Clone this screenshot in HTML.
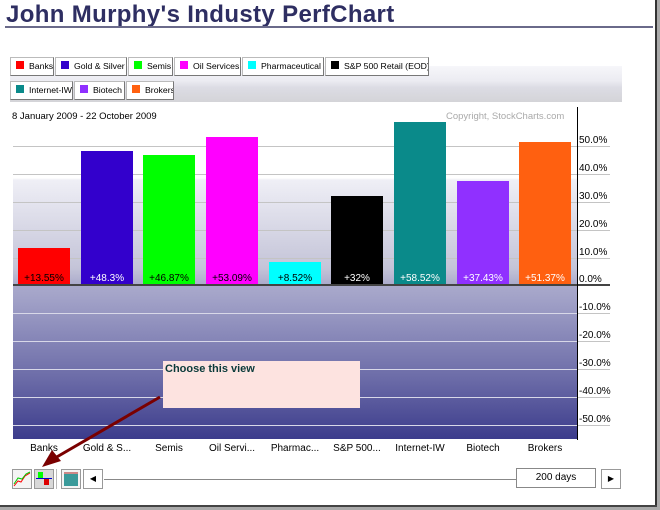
<!DOCTYPE html>
<html><head><meta charset="utf-8"><style>
*{margin:0;padding:0;box-sizing:border-box}
body{width:660px;height:510px;background:#fff;position:relative;overflow:hidden;font-family:"Liberation Sans",sans-serif;font-size:10px;color:#000}
.abs{position:absolute}
.title{left:6px;top:1px;font-size:24px;font-weight:bold;color:#2e2e62;letter-spacing:0.35px}
.uline{left:5px;top:26px;width:648px;height:2px;background:#6a6a8a}
.rb{left:655px;top:0;width:2px;height:506px;background:#333}
.rs{left:657px;top:0;width:3px;height:508px;background:#aaa}
.bb{left:0;top:505px;width:657px;height:2px;background:#444}
.bs{left:0;top:507px;width:660px;height:3px;background:#aaa}
.strip{left:10px;top:66px;width:612px;height:36px;background:linear-gradient(#f6f6fa,#ececf2 40%,#dcdce4 60%,#d4d4d8)}
.tab{position:absolute;height:19px;background:#fff;border:1px solid #bbb;border-right-color:#777;border-bottom-color:#777;font-size:8.7px;line-height:17px;padding-left:5px;white-space:nowrap;overflow:hidden}
.tab i{display:inline-block;width:8px;height:8px;margin-right:5px;vertical-align:-0px}
.plot{left:13px;top:118px;width:564px;height:321px;background:linear-gradient(#fff 0,#fff 60px,#efeff6 62px,#c4c4d8 150px,#aaaacb 167px,#a2a2c8 180px,#6c6ca8 260px,#3c3c8c 321px)}
.gl{position:absolute;height:1px;background:#c4c4c4}
.gw{position:absolute;height:1px;background:#d8d8e8}
.zero{left:13px;top:284px;width:597px;height:2px;background:#444}
.vax{left:577px;top:107px;width:1px;height:333px;background:#000}
.bar{position:absolute;width:52px;bottom:225px}
.bar span{position:absolute;bottom:1px;left:0;width:100%;text-align:center;font-size:10px;color:#fff}
.yl{position:absolute;left:579px;font-size:10px}
.xl{position:absolute;top:443px;width:62px;text-align:center;font-size:10px}
.btn{position:absolute;top:469px;width:20px;height:20px;border:1px solid #999;background:#f4f4f4}
</style></head><body>
<div class="abs title">John Murphy's Industy PerfChart</div>
<div class="abs uline"></div>
<div class="abs strip"></div>
<div class="tab" style="left:10px;top:57px;width:44px"><i style="background:#f00"></i>Banks</div>
<div class="tab" style="left:55px;top:57px;width:72px"><i style="background:#3300cc"></i>Gold &amp; Silver</div>
<div class="tab" style="left:128px;top:57px;width:45px"><i style="background:#0f0"></i>Semis</div>
<div class="tab" style="left:174px;top:57px;width:67px"><i style="background:#f0f"></i>Oil Services</div>
<div class="tab" style="left:242px;top:57px;width:82px"><i style="background:#0ff"></i>Pharmaceutical</div>
<div class="tab" style="left:325px;top:57px;width:104px"><i style="background:#000"></i>S&amp;P 500 Retail (EOD)</div>
<div class="tab" style="left:10px;top:81px;width:63px"><i style="background:#0a8a8a"></i>Internet-IW</div>
<div class="tab" style="left:74px;top:81px;width:51px"><i style="background:#9030ff"></i>Biotech</div>
<div class="tab" style="left:126px;top:81px;width:48px"><i style="background:#ff6010"></i>Brokers</div>
<div class="abs plot"></div>
<div class="abs" style="left:12px;top:111px;font-size:9.5px">8 January 2009 - 22 October 2009</div>
<div class="abs" style="left:446px;top:111px;font-size:9.5px;color:#aaa">Copyright, StockCharts.com</div>
<div class="gl" style="left:13px;top:146px;width:597px"></div>
<div class="gl" style="left:13px;top:174px;width:597px"></div>
<div class="gl" style="left:13px;top:202px;width:597px"></div>
<div class="gl" style="left:13px;top:230px;width:597px"></div>
<div class="gl" style="left:13px;top:258px;width:597px"></div>
<div class="gw" style="left:13px;top:313px;width:564px"></div><div class="gl" style="left:577px;top:313px;width:33px"></div>
<div class="gw" style="left:13px;top:341px;width:564px"></div><div class="gl" style="left:577px;top:341px;width:33px"></div>
<div class="gw" style="left:13px;top:369px;width:564px"></div><div class="gl" style="left:577px;top:369px;width:33px"></div>
<div class="gw" style="left:13px;top:397px;width:564px"></div><div class="gl" style="left:577px;top:397px;width:33px"></div>
<div class="gw" style="left:13px;top:425px;width:564px"></div><div class="gl" style="left:577px;top:425px;width:33px"></div>
<div class="bar" style="left:18px;height:37px;background:#f00"><span style="color:#000">+13.55%</span></div>
<div class="bar" style="left:81px;height:134px;background:#3300cc"><span>+48.3%</span></div>
<div class="bar" style="left:143px;height:130px;background:#0f0"><span style="color:#000">+46.87%</span></div>
<div class="bar" style="left:206px;height:148px;background:#f0f"><span style="color:#000">+53.09%</span></div>
<div class="bar" style="left:269px;height:23px;background:#0ff"><span style="color:#000">+8.52%</span></div>
<div class="bar" style="left:331px;height:89px;background:#000"><span>+32%</span></div>
<div class="bar" style="left:394px;height:163px;background:#0a8a8a"><span>+58.52%</span></div>
<div class="bar" style="left:457px;height:104px;background:#9030ff"><span>+37.43%</span></div>
<div class="bar" style="left:519px;height:143px;background:#ff6010"><span>+51.37%</span></div>
<div class="abs zero"></div>
<div class="abs vax"></div>
<div class="yl" style="top:135px">50.0%</div>
<div class="yl" style="top:163px">40.0%</div>
<div class="yl" style="top:191px">30.0%</div>
<div class="yl" style="top:219px">20.0%</div>
<div class="yl" style="top:247px">10.0%</div>
<div class="yl" style="top:274px">0.0%</div>
<div class="yl" style="top:302px">-10.0%</div>
<div class="yl" style="top:330px">-20.0%</div>
<div class="yl" style="top:358px">-30.0%</div>
<div class="yl" style="top:386px">-40.0%</div>
<div class="yl" style="top:414px">-50.0%</div>
<div class="xl" style="left:13px">Banks</div>
<div class="xl" style="left:76px">Gold &amp; S...</div>
<div class="xl" style="left:138px">Semis</div>
<div class="xl" style="left:201px">Oil Servi...</div>
<div class="xl" style="left:264px">Pharmac...</div>
<div class="xl" style="left:326px">S&amp;P 500...</div>
<div class="xl" style="left:389px">Internet-IW</div>
<div class="xl" style="left:452px">Biotech</div>
<div class="xl" style="left:514px">Brokers</div>
<div class="abs" style="left:163px;top:361px;width:197px;height:47px;background:#fde3e0;font-weight:bold;font-size:11px;color:#0a3a3a;padding:2px 2px">Choose this view</div>
<svg class="abs" style="left:0;top:0" width="660" height="510">
<line x1="160" y1="397" x2="55" y2="458" stroke="#7a0000" stroke-width="3"/>
<polygon points="42,467 52,450 61,461" fill="#7a0000"/>
</svg>
<div class="btn" style="left:12px"><svg width="18" height="18"><polyline points="1,16 5,11 8,12 12,6 17,3" fill="none" stroke="#f00" stroke-width="1"/><polyline points="1,14 5,8 9,9 13,4 17,2" fill="none" stroke="#0c0" stroke-width="1"/></svg></div>
<div class="btn" style="left:34px;background:#d8d8d8"><svg width="18" height="18"><rect x="3" y="2" width="5" height="6" fill="#0f0"/><rect x="9" y="9" width="5" height="6" fill="#d00"/><line x1="1" y1="8.5" x2="17" y2="8.5" stroke="#00c"/></svg></div>
<div class="abs" style="left:56px;top:469px;width:1px;height:20px;background:#bbb"></div>
<div class="btn" style="left:61px"><div style="margin:2px;width:14px;height:14px;background:#3a9a9a;border-top:2px solid #c88"></div></div>
<div class="btn" style="left:83px;background:#fff;font-size:8px;text-align:center;line-height:18px">◀</div>
<div class="abs" style="left:104px;top:479px;width:306px;height:1px;background:#888"></div>
<div class="abs" style="left:410px;top:479px;width:110px;height:1px;background:#888"></div>
<div class="abs" style="left:516px;top:468px;width:80px;height:20px;border:1px solid #888;background:#fff;text-align:center;line-height:18px;font-size:10px">200 days</div>
<div class="btn" style="left:601px;background:#fff;font-size:8px;text-align:center;line-height:18px">▶</div>
<div class="abs rb"></div><div class="abs rs"></div>
<div class="abs bb"></div><div class="abs bs"></div>
</body></html>
